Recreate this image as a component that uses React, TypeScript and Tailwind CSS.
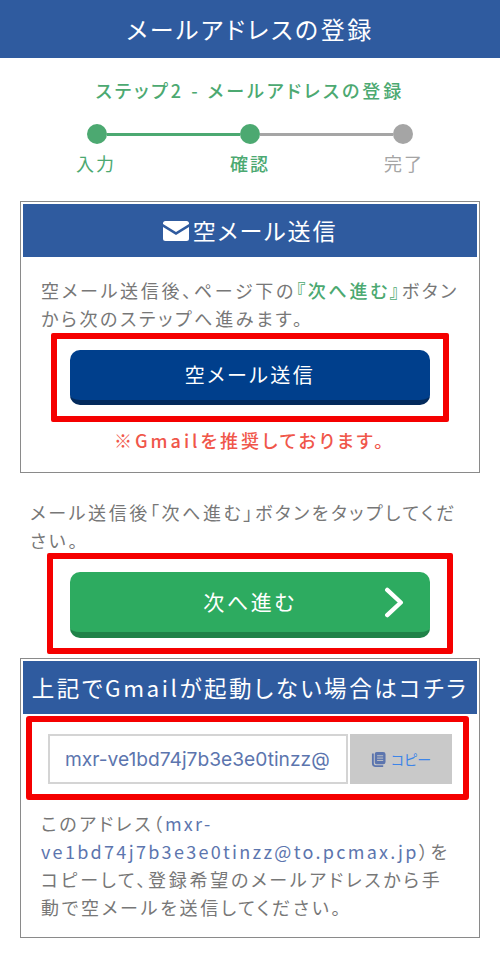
/* ---------------- Step indicator ---------------- */

function Stepper() {
  return (
    <div className="mx-auto mt-[21px] w-[326px]">
      <div className="flex h-[20px] items-center">
        <span className="h-[20px] w-[20px] shrink-0 rounded-full bg-[#4ca971]" />
        <span className="h-[3px] flex-1 bg-[#4ca971]" />
        <span className="h-[20px] w-[20px] shrink-0 rounded-full bg-[#4ca971]" />
        <span className="h-[3px] flex-1 bg-[#a5a5a5]" />
        <span className="h-[20px] w-[20px] shrink-0 rounded-full bg-[#a5a5a5]" />
      </div>
      <div className="-mx-[11px] mt-[5px] flex justify-between text-[18px] leading-[28px] tracking-[2px]">
        <span className="text-[#4ca971]">入力</span>
        <span className="font-medium text-[#4ca971]">確認</span>
        <span className="text-[#a5a5a5]">完了</span>
      </div>
    </div>
  );
}

/* ---------------- Card wrapper ---------------- */

function Card({ title, className, children }: { title: React.ReactNode; className: string; children: React.ReactNode }) {
  return (
    <section className={`mx-[20px] border border-[#8a8a8a] p-[2px] pb-0 ${className}`}>
      <h2 className="flex h-[53px] items-center justify-center bg-[#2f5b9f] text-white">{title}</h2>
      {children}
    </section>
  );
}

export default function App() {
  return (
    <div
      className="h-[955px] w-[500px] overflow-hidden bg-white font-['Noto_Sans_CJK_JP','Noto_Sans',sans-serif] [font-feature-settings:'palt']"
    >
      <header className="flex h-[58px] items-center justify-center bg-[#2f5b9f] text-[24px] tracking-[2.500px] text-white">
        メールアドレスの登録
      </header>

      <p className="mt-[19px] text-center text-[18px] font-medium leading-[26px] tracking-[3px] text-[#4ca971]">
        ステップ2 - メールアドレスの登録
      </p>
      <Stepper />

      <Card
        className="mt-[24px] h-[272px]"
        title={
          <span className="flex items-center gap-[4px] text-[23px] tracking-[1.900px]">
            <svg viewBox="0 0 26 20" className="h-[20px] w-[26px]" fill="#fff">
              <path d="M2.500 0h21A2.500 2.500 0 0 1 26 2.500v.6L13 11 0 3.100v-.6A2.500 2.500 0 0 1 2.500 0Z" />
              <path d="M0 6v11.500A2.500 2.500 0 0 0 2.500 20h21a2.500 2.500 0 0 0 2.500-2.500V6l-13 8Z" />
            </svg>
            空メール送信
          </span>
        }
      >
        <p className="mt-[19px] px-[18px] text-[18px] leading-[28px] tracking-[2.700px] text-[#777777]">
          空メール送信後、ページ下の<span className="font-medium text-[#4ca971]">『次へ進む』</span>ボタンから次のステップへ進みます。
        </p>
        <div className="mx-auto mt-[1px] flex h-[89px] w-[398px] justify-center rounded-[2px] border-[6px] border-[#f50000] pt-[11px]">
          <button
            type="button"
            className="h-[55px] w-[360px] rounded-[10px] border-b-[5px] border-[#032a5c] bg-[#003f8c] text-[20px] tracking-[2.400px] text-white"
          >
            空メール送信
          </button>
        </div>
        <p className="mt-[4px] text-center text-[18px] font-medium leading-[28px] tracking-[3px] text-[#f0564a]">
          ※Gmailを推奨しております。
        </p>
      </Card>

      <p className="mx-[30px] mt-[25px] text-[18px] leading-[28px] tracking-[2.600px] text-[#777777]">
        メール送信後「次へ進む」ボタンをタップしてください。
      </p>
      <div className="mx-auto -mt-[1px] flex h-[101px] w-[406px] justify-center rounded-[2px] border-[6px] border-[#f50000] pt-[13px]">
        <button
          type="button"
          className="relative h-[66px] w-[360px] rounded-[10px] border-b-[6px] border-[#1f8248] bg-[#2dab60] text-[21px] tracking-[2.500px] text-white"
        >
          次へ進む
          <svg viewBox="0 0 20 32" className="absolute right-[26px] top-[15px] h-[31px] w-[20px]" fill="none" stroke="#fff" strokeWidth="4.500" strokeLinecap="round" strokeLinejoin="round">
            <path d="M3 3l14 13L3 29" />
          </svg>
        </button>
      </div>

      <Card
        className="mt-[4px] h-[280px]"
        title={<span className="whitespace-nowrap text-[22.500px] tracking-[2.550px]">上記でGmailが起動しない場合はコチラ</span>}
      >
        <div className="mt-[2px] ml-[3px] flex h-[84px] w-[443px] items-center rounded-[3px] border-[6px] border-[#f50000] pl-[16px] pt-[2px]">
          <div className="flex h-[50px] w-[300px] items-center overflow-hidden border-2 border-[#d4d4d4] pl-[15px] text-[19.200px] text-[#5c75ae] font-['Inter',sans-serif]">
            mxr-ve1bd74j7b3e3e0tinzz@
          </div>
          <button
            type="button"
            className="ml-[2px] flex h-[50px] w-[102px] items-center justify-center gap-[5px] bg-[#c9c9c9] text-[14px] text-[#3d85e8]"
          >
            <svg viewBox="0 0 16 16" className="h-[15px] w-[15px]">
              <path d="M2 1.500v10.500a3 3 0 0 0 3 3h8" fill="none" stroke="#5c75ae" strokeWidth="2" />
              <path d="M6 0h7a2.500 2.500 0 0 1 2.500 2.500v8A2.500 2.500 0 0 1 13 13H6a2 2 0 0 1-2-2V2a2 2 0 0 1 2-2Z" fill="#5c75ae" />
              <path d="M6.500 4h6.500M6.500 6.500h6.500M6.500 9h6.500" stroke="#c9c9c9" strokeWidth="1" />
            </svg>
            コピー
          </button>
        </div>
        <p className="mt-[9px] px-[18px] text-[18px] leading-[28px] tracking-[2.700px] text-[#777777]">
          このアドレス（<span className="break-all tracking-[2.300px] text-[#5c75ae]">mxr-<br />ve1bd74j7b3e3e0tinzz@to.pcmax.jp</span>）をコピーして、登録希望のメールアドレスから手動で空メールを送信してください。
        </p>
      </Card>
    </div>
  );
}
